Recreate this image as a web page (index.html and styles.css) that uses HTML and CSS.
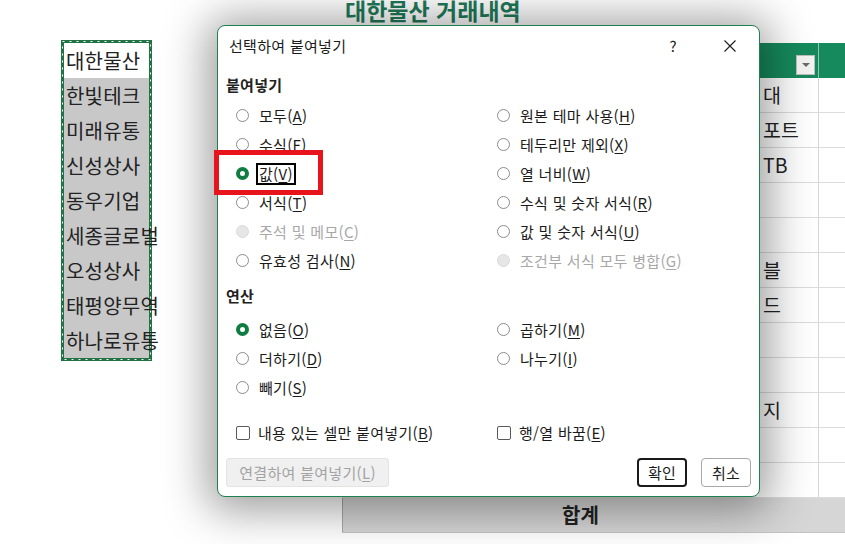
FILE: index.html
```html
<!DOCTYPE html>
<html lang="ko">
<head>
	<meta charset="UTF-8">
	<title>선택하여 붙여넣기</title>

	<link rel="stylesheet" href="styles.css">
</head>
<body>

	<div class="sheet">
		<h1 class="title">대한물산 거래내역</h1>

		<div class="sheet-row">
			<div class="copy-range">
				<div class="cell active">대한물산</div>
				<div class="cell">한빛테크</div>
				<div class="cell">미래유통</div>
				<div class="cell">신성상사</div>
				<div class="cell">동우기업</div>
				<div class="cell">세종글로벌</div>
				<div class="cell">오성상사</div>
				<div class="cell">태평양무역</div>
				<div class="cell">하나로유통</div>
				<svg class="ants" width="91" height="321" viewBox="0 0 91 321">
					<rect x="1.5" y="1.5" width="88" height="318" fill="none" stroke="#217346" stroke-width="3"/>
					<rect x="1.5" y="1.5" width="88" height="318" fill="none" stroke="#fff" stroke-width="1" stroke-dasharray="2 5"/>
				</svg>
			</div>

			<div class="table">
				<div class="trow head">
					<div class="ca"><span class="filter"></span></div>
					<div class="cb"></div>
				</div>
				<div class="trow"><div class="ca">대</div><div class="cb"></div></div>
				<div class="trow"><div class="ca">포트</div><div class="cb"></div></div>
				<div class="trow"><div class="ca">TB</div><div class="cb"></div></div>
				<div class="trow"><div class="ca"></div><div class="cb"></div></div>
				<div class="trow"><div class="ca"></div><div class="cb"></div></div>
				<div class="trow"><div class="ca">블</div><div class="cb"></div></div>
				<div class="trow"><div class="ca">드</div><div class="cb"></div></div>
				<div class="trow"><div class="ca"></div><div class="cb"></div></div>
				<div class="trow"><div class="ca"></div><div class="cb"></div></div>
				<div class="trow"><div class="ca">지</div><div class="cb"></div></div>
				<div class="trow"><div class="ca"></div><div class="cb"></div></div>
				<div class="trow"><div class="ca"></div><div class="cb"></div></div>
				<div class="trow total"><div class="ca">합계</div><div class="cb"></div></div>
			</div>
		</div>
	</div>

	<div class="dialog">
		<div class="dlg-head">
			<span class="dlg-title">선택하여 붙여넣기</span>
			<span class="help">?</span>
			<span class="close">
				<svg width="12" height="12" viewBox="0 0 12 12"><path d="M0.5 0.5 L11.5 11.5 M11.5 0.5 L0.5 11.5" stroke="#222" stroke-width="1.2" fill="none"/></svg>
			</span>
		</div>

		<div class="dlg-body">
			<div class="group-label">붙여넣기</div>
			<div class="options">
				<label class="opt"><span class="radio"></span>모두(<u>A</u>)</label>
				<label class="opt"><span class="radio"></span>원본 테마 사용(<u>H</u>)</label>
				<label class="opt"><span class="radio"></span>수식(<u>F</u>)</label>
				<label class="opt"><span class="radio"></span>테두리만 제외(<u>X</u>)</label>
				<label class="opt"><span class="radio on"></span><span class="focus">값(<u>V</u>)</span></label>
				<label class="opt"><span class="radio"></span>열 너비(<u>W</u>)</label>
				<label class="opt"><span class="radio"></span>서식(<u>T</u>)</label>
				<label class="opt"><span class="radio"></span>수식 및 숫자 서식(<u>R</u>)</label>
				<label class="opt off"><span class="radio"></span>주석 및 메모(<u>C</u>)</label>
				<label class="opt"><span class="radio"></span>값 및 숫자 서식(<u>U</u>)</label>
				<label class="opt"><span class="radio"></span>유효성 검사(<u>N</u>)</label>
				<label class="opt off"><span class="radio"></span>조건부 서식 모두 병합(<u>G</u>)</label>
			</div>

			<div class="group-label second">연산</div>
			<div class="options ops">
				<label class="opt"><span class="radio on"></span>없음(<u>O</u>)</label>
				<label class="opt"><span class="radio"></span>곱하기(<u>M</u>)</label>
				<label class="opt"><span class="radio"></span>더하기(<u>D</u>)</label>
				<label class="opt"><span class="radio"></span>나누기(<u>I</u>)</label>
				<label class="opt"><span class="radio"></span>빼기(<u>S</u>)</label>
			</div>

			<div class="options checks">
				<label class="opt"><span class="box"></span>내용 있는 셀만 붙여넣기(<u>B</u>)</label>
				<label class="opt"><span class="box"></span>행/열 바꿈(<u>E</u>)</label>
			</div>

			<div class="buttons">
				<span class="btn btn-link">연결하여 붙여넣기(<u>L</u>)</span>
				<span class="btn btn-ok">확인</span>
				<span class="btn btn-cancel">취소</span>
			</div>
		</div>

		<div class="highlight"></div>
	</div>

</body>
</html>
```

FILE: styles.css
```css
body {
	margin: 0;
	width: 845px;
	height: 544px;
	overflow: hidden;
	position: relative;
	background: #fff;
	font-family: "Noto Sans CJK KR", "Noto Sans", sans-serif;
	color: #1b1b1b;
}

.title {
	margin: -3px 0 0 345px;
	height: 43px;
	font-size: 23px;
	line-height: 26px;
	font-weight: bold;
	color: #1f7a5a;
	white-space: nowrap;
}

.sheet-row {
	display: flex;
	align-items: flex-start;
	padding-left: 61px;
}

/* copied range with marching ants */
.copy-range {
	width: 91px;
	box-sizing: border-box;
	padding: 3px;
	position: relative;
}

.ants {
	position: absolute;
	left: 0;
	top: 0;
	pointer-events: none;
}

.cell {
	position: relative;
	z-index: 1;
	height: 35px;
	line-height: 35px;
	padding-left: 2px;
	font-size: 20px;
	letter-spacing: 0.2px;
	color: #222;
	white-space: nowrap;
	background: #c8c8c8;
}

.cell.active {
	background: #fff;
}

/* table behind the dialog */
.table {
	margin: 3px 0 0 190px;
	flex: none;
}

.trow {
	display: flex;
	height: 35px;
	box-sizing: border-box;
	border-bottom: 1px solid #dcdcdc;
}

.ca {
	width: 476px;
	box-sizing: border-box;
	padding-left: 421px;
	font-size: 19.5px;
	line-height: 34px;
	color: #222;
	white-space: nowrap;
}

.cb {
	width: 120px;
	border-left: 1px solid #d6d6d6;
}

.trow.head {
	background: #168a5c;
	border-bottom: 0;
}

.trow.head .ca {
	display: flex;
	justify-content: flex-end;
	align-items: flex-end;
	padding: 0 3px 3px 0;
}

.trow.head .cb {
	border-left-color: #8cc7ad;
}

.filter {
	width: 19px;
	height: 20px;
	box-sizing: border-box;
	background: #f3f3f3;
	border: 1px solid #bdbdbd;
	position: relative;
}

.filter:after {
	content: '';
	position: absolute;
	left: 5px;
	top: 7px;
	border: 4px solid transparent;
	border-top: 4px solid #6a6a6a;
}

.trow.total {
	background: #d6d6d6;
	border-bottom: 1px solid #c4c4c4;
}

.trow.total .ca {
	padding: 0;
	text-align: center;
	font-weight: bold;
	font-size: 20px;
	color: #222;
	border-left: 1px solid #a8a8a8;
}

/* dialog */
.dialog {
	position: absolute;
	left: 217px;
	top: 25px;
	width: 543px;
	height: 472px;
	box-sizing: border-box;
	background: #fff;
	border: 1px solid #1e7f4f;
	border-radius: 8px;
	box-shadow: 0 4px 44px 10px rgba(0, 0, 0, 0.38);
	font-size: 15px;
	letter-spacing: 0.3px;
}

.dlg-head {
	display: flex;
	align-items: center;
	height: 39px;
	padding: 0 23px 0 11px;
}

.dlg-title {
	flex: 1;
}

.help {
	font-size: 15px;
	margin-right: 47px;
}

.close {
	display: flex;
}

.dlg-body {
	padding: 0 8px;
}

.group-label {
	font-weight: bold;
	line-height: 20px;
	margin-top: 10px;
	color: #222;
}

.group-label.second {
	margin-top: 11px;
}

.options {
	display: grid;
	grid-template-columns: 261px 1fr;
	margin: 6px 0 0 10px;
}

.options.ops {
	margin-top: 9px;
}

.options.checks {
	margin-top: 16px;
}

.opt {
	display: flex;
	align-items: center;
	height: 29px;
	white-space: nowrap;
}

u {
	text-underline-offset: 2px;
}

.radio {
	width: 13px;
	height: 13px;
	box-sizing: border-box;
	border: 1px solid #8c8c8c;
	border-radius: 50%;
	margin-right: 10px;
	flex: none;
}

.radio.on {
	border: 4px solid #107c41;
}

.opt.off {
	color: #a8a8a8;
}

.opt.off .radio {
	background: #e6e6e6;
	border-color: #dadada;
}

.focus {
	border: 2px solid #000;
	margin-left: -3px;
	padding: 0 1px;
	line-height: 18px;
}

.box {
	width: 14px;
	height: 14px;
	box-sizing: border-box;
	border: 1px solid #5a5a5a;
	border-radius: 2px;
	margin-right: 8px;
	flex: none;
}

.buttons {
	display: flex;
	align-items: center;
	margin-top: 11px;
}

.btn {
	height: 29px;
	box-sizing: border-box;
	border-radius: 4px;
	display: flex;
	align-items: center;
	justify-content: center;
}

.btn-link {
	width: 163px;
	margin-right: auto;
	background: #f0f0f0;
	border: 1px solid #e3e3e3;
	color: #a3a3a3;
	border-radius: 3px;
}

.btn-ok {
	width: 50px;
	margin-right: 14px;
	border: 2px solid #1a1a1a;
}

.btn-cancel {
	width: 50px;
	border: 1px solid #a8a8a8;
}

.highlight {
	position: absolute;
	left: -4px;
	top: 124px;
	width: 109px;
	height: 45px;
	box-sizing: border-box;
	border: 5px solid #e8141c;
}
```
